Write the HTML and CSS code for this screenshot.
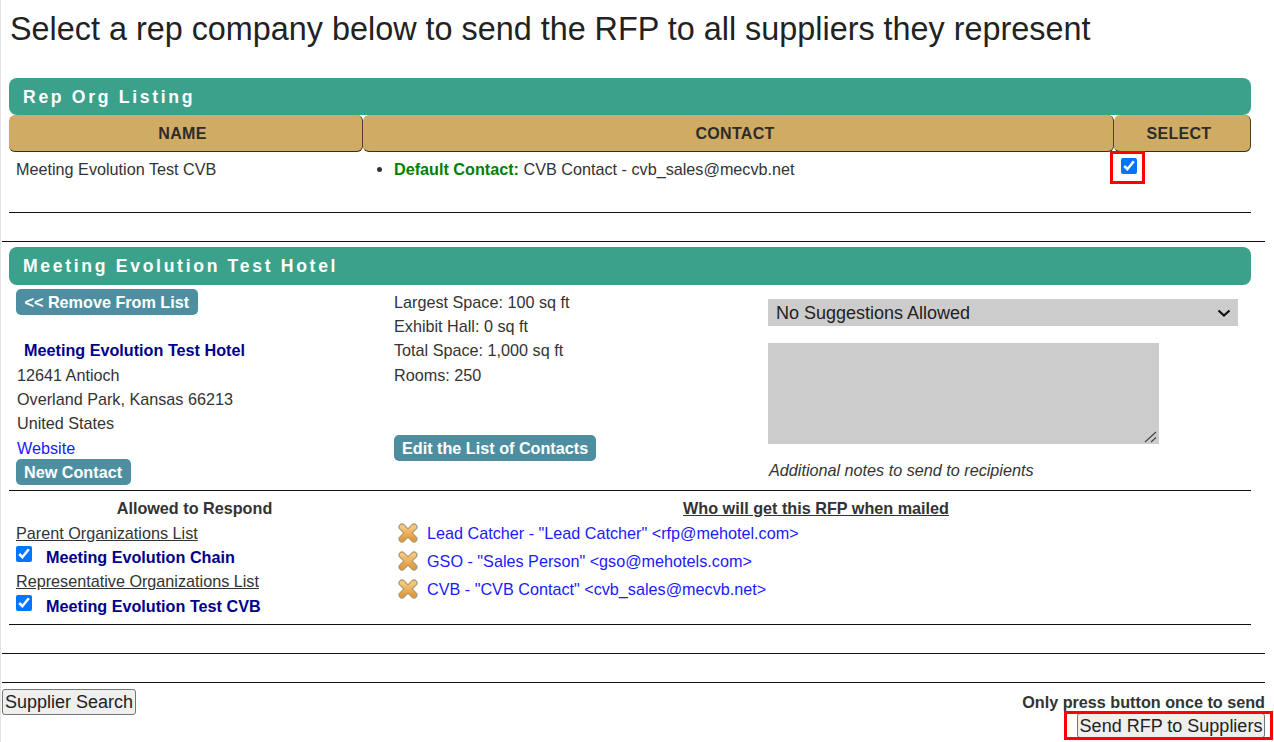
FILE: index.html
```html
<!DOCTYPE html>
<html lang="en">
<head>
<meta charset="utf-8">
<title>Send RFP</title>
<link rel="stylesheet" href="styles.css">
</head>
<body>
<svg class="defs" width="0" height="0" aria-hidden="true">
  <defs>
    <linearGradient id="xfill" x1="0" y1="0" x2="0" y2="1">
      <stop offset="0" stop-color="#f6c878"/>
      <stop offset="1" stop-color="#e49a3a"/>
    </linearGradient>
    <symbol id="xicon" viewBox="0 0 20 22">
      <path d="M4 5 L16 17 M16 5 L4 17" fill="none" stroke="#a89878" stroke-width="7" stroke-linecap="round"/>
      <path d="M4 5 L16 17 M16 5 L4 17" fill="none" stroke="url(#xfill)" stroke-width="4.6" stroke-linecap="round"/>
    </symbol>
  </defs>
</svg>
<main class="page">
  <h1 class="title">Select a rep company below to send the RFP to all suppliers they represent</h1>

  <section class="block">
    <h2 class="bar">Rep Org Listing</h2>
    <div class="heads">
      <div class="head">NAME</div>
      <div class="head">CONTACT</div>
      <div class="head">SELECT</div>
    </div>
    <div class="org-row">
      <div class="org-name">Meeting Evolution Test CVB</div>
      <ul class="org-contact">
        <li><strong class="green">Default Contact:</strong> CVB Contact - cvb_sales@mecvb.net</li>
      </ul>
      <div class="org-select"><span class="red-box"><input type="checkbox" class="check" checked></span></div>
    </div>
    <hr class="rule rule-inner">
  </section>

  <hr class="rule rule-outer first-outer">

  <section class="block hotel">
    <h2 class="bar bar-tall">Meeting Evolution Test Hotel</h2>
    <div class="hotel-grid">
      <div class="col-addr">
        <a class="pill remove">&lt;&lt; Remove From List</a>
        <div class="hotel-name">Meeting Evolution Test Hotel</div>
        <div class="line">12641 Antioch</div>
        <div class="line">Overland Park, Kansas 66213</div>
        <div class="line">United States</div>
        <div class="line"><a class="link">Website</a></div>
        <a class="pill new-contact">New Contact</a>
      </div>
      <div class="col-stats">
        <div class="line">Largest Space: 100 sq ft</div>
        <div class="line">Exhibit Hall: 0 sq ft</div>
        <div class="line">Total Space: 1,000 sq ft</div>
        <div class="line">Rooms: 250</div>
        <a class="pill edit-list">Edit the List of Contacts</a>
      </div>
      <div class="col-notes">
        <div class="suggest-wrap">
          <select class="suggest"><option>No Suggestions Allowed</option></select>
          <svg class="chev" width="14" height="8" viewBox="0 0 14 8" aria-hidden="true"><path d="M1.5 1.5 L7 6.5 L12.5 1.5" fill="none" stroke="#111" stroke-width="2.2"/></svg>
        </div>
        <div class="notes-wrap">
          <textarea class="notes"></textarea>
          <svg class="grip" width="14" height="12" viewBox="0 0 14 12" aria-hidden="true"><path d="M1 11 L12 1 M7 11 L12 6.5" fill="none" stroke="#444" stroke-width="1.1"/></svg>
        </div>
        <div class="hint">Additional notes to send to recipients</div>
      </div>
    </div>
    <hr class="rule rule-inner">
    <div class="recip-grid">
      <div class="col-allowed">
        <div class="allowed-title">Allowed to Respond</div>
        <div class="under">Parent Organizations List</div>
        <div class="org-check"><input type="checkbox" class="check" checked><span class="navy">Meeting Evolution Chain</span></div>
        <div class="under">Representative Organizations List</div>
        <div class="org-check"><input type="checkbox" class="check" checked><span class="navy">Meeting Evolution Test CVB</span></div>
      </div>
      <div class="col-who">
        <div class="who-title">Who will get this RFP when mailed</div>
        <div class="who"><svg class="x" width="20" height="22"><use href="#xicon"/></svg><a class="link">Lead Catcher - "Lead Catcher" &lt;rfp@mehotel.com&gt;</a></div>
        <div class="who"><svg class="x" width="20" height="22"><use href="#xicon"/></svg><a class="link">GSO - "Sales Person" &lt;gso@mehotels.com&gt;</a></div>
        <div class="who"><svg class="x" width="20" height="22"><use href="#xicon"/></svg><a class="link">CVB - "CVB Contact" &lt;cvb_sales@mecvb.net&gt;</a></div>
      </div>
    </div>
    <hr class="rule rule-inner">
  </section>

  <hr class="rule rule-outer second-outer">
  <hr class="rule rule-outer third-outer">

  <footer class="foot">
    <button class="btn search-btn" type="button">Supplier Search</button>
    <div class="send">
      <div class="once">Only press button once to send</div>
      <span class="red-send"><button class="btn send-btn" type="button">Send RFP to Suppliers</button></span>
    </div>
  </footer>
</main>
</body>
</html>
```
FILE: styles.css
```css
*, *::before, *::after { box-sizing: border-box; }
html, body { margin: 0; padding: 0; background: #fff; }
body {
  height: 742px;
  overflow: hidden;
  font-family: "Liberation Sans", Arial, sans-serif;
  font-size: 16.2px;
  line-height: 24.33px;
  color: #333;
}
.defs { position: absolute; }
.page {
  height: 742px;
  border-left: 1px solid #e4e4e4;
  padding-left: 1px;
  width: 1265px;
}
.title {
  margin: 0;
  padding: 11px 0 0 8px;
  height: 78px;
  font-size: 32.37px;
  line-height: 37px;
  font-weight: 400;
  color: #222;
}
.block { margin: 0 0 0 7px; width: 1242px; }
.bar {
  margin: 0;
  height: 37px;
  padding-left: 14px;
  background: #3ca18a;
  border-radius: 8px;
  color: #fff;
  font-size: 17.6px;
  font-weight: 700;
  line-height: 39px;
  letter-spacing: 2.68px;
}
.bar-tall { height: 38px; line-height: 39px; }
.heads { display: grid; grid-template-columns: 354px 751px 137px; }
.head {
  height: 37px;
  padding-right: 6px;
  background: #cfab63;
  border-radius: 6px;
  border-right: 1px solid #4c4026;
  border-bottom: 1px solid #3a3018;
  text-align: center;
  font-weight: 700;
  font-size: 16px;
  line-height: 37px;
  letter-spacing: 0.3px;
  color: #2c2c2c;
}
.org-row { display: grid; grid-template-columns: 354px 751px 137px; height: 60px; }
.org-name { padding: 5px 0 0 7px; }
.org-contact { margin: 0; padding: 5px 0 0 31px; }
.green { color: #008000; }
.org-select { position: relative; }
.red-box {
  position: absolute;
  left: -4px;
  top: -1px;
  width: 35px;
  height: 33px;
  border: 3px solid #f00;
}
.red-box .check { position: absolute; left: 8px; top: 4px; margin: 0; }
.check { width: 16px; height: 16px; margin: 0; accent-color: #0075ff; }
.rule { border: 0; margin: 0; height: 1px; background: #111; }
.first-outer { margin-top: 28px; }
.second-outer { margin-top: 28px; }
.third-outer { margin-top: 28px; }
.rule-outer { width: 1263px; }
.hotel { margin-top: 5px; }
.hotel-grid {
  display: grid;
  grid-template-columns: 385px 374px 1fr;
  height: 205px;
}
.pill {
  display: inline-block;
  padding: 0 8px;
  height: 26px;
  line-height: 26px;
  background: #4d8fa0;
  color: #fff;
  font-weight: 700;
  border-radius: 5px;
  white-space: nowrap;
}
.remove { padding: 0 8.5px; }
.col-addr { padding: 4px 0 0 7px; }
.col-addr .line { padding-left: 1px; }
.hotel-name { margin: 23px 0 0.5px; padding-left: 8px; font-weight: 700; color: #00008b; }
.new-contact { display: block; width: 115px; height: 26px; margin-top: -1.5px; }
.link { color: #1a1aff; }
.col-stats { padding-top: 4.7px; }
.edit-list { display: block; width: 202px; margin-top: 48px; }
.col-notes { padding-top: 14px; }
.suggest-wrap { position: relative; width: 470px; }
.suggest {
  display: block;
  width: 470px;
  height: 27px;
  border: 0;
  padding: 0 8px;
  appearance: none;
  background-color: #ccc;
  color: #222;
  font-family: inherit;
  font-size: 18px;
}
.chev { position: absolute; right: 7px; top: 10px; pointer-events: none; }
.notes-wrap { position: relative; width: 391px; margin-top: 17px; }
.notes {
  display: block;
  width: 391px;
  height: 101px;
  border: 0;
  padding: 0;
  background: #ccc;
  border-radius: 0;
  outline: 0;
  resize: none;
}
.grip { position: absolute; right: 1px; bottom: 1px; pointer-events: none; }
.hint { margin-top: 14px; padding-left: 1px; font-style: italic; }
.recip-grid { display: grid; grid-template-columns: 385px 1fr; height: 133px; }
.col-allowed { padding: 5.4px 0 0 7px; }
.allowed-title { text-align: center; font-weight: 700; width: 357px; }
.under { text-decoration: underline; }
.org-check { display: flex; align-items: flex-start; height: 24.33px; }
.org-check .check { margin-top: 1px; }
.navy { margin-left: 14px; font-weight: 700; color: #00008b; }
.col-who { padding-top: 5px; }
.who-title { text-align: center; width: 844px; margin-bottom: -1px; font-weight: 700; text-decoration: underline; }
.who { display: flex; align-items: center; height: 28px; }
.x { margin: 0 9px 0 4px; flex: none; }
.foot {
  display: flex;
  justify-content: space-between;
  align-items: flex-start;
  padding-top: 6px;
  width: 1263px;
}
.btn {
  height: 26px;
  padding: 0 2px;
  background: #efefef;
  border: 1px solid #767676;
  border-radius: 3px;
  font-family: inherit;
  font-size: 18px;
  color: #222;
  line-height: 22px;
}
.search-btn { width: 134px; padding: 0; }
.send { text-align: right; }
.once { font-weight: 700; height: 24px; padding-top: 1px; }
.red-send {
  position: relative;
  display: block;
}
.red-send::before {
  content: "";
  position: absolute;
  right: -8px;
  top: -2px;
  width: 209px;
  height: 29px;
  border: 3px solid #f00;
  pointer-events: none;
}
.send-btn { height: 25px; width: 188px; padding: 0; display: block; margin-left: auto; }
```
